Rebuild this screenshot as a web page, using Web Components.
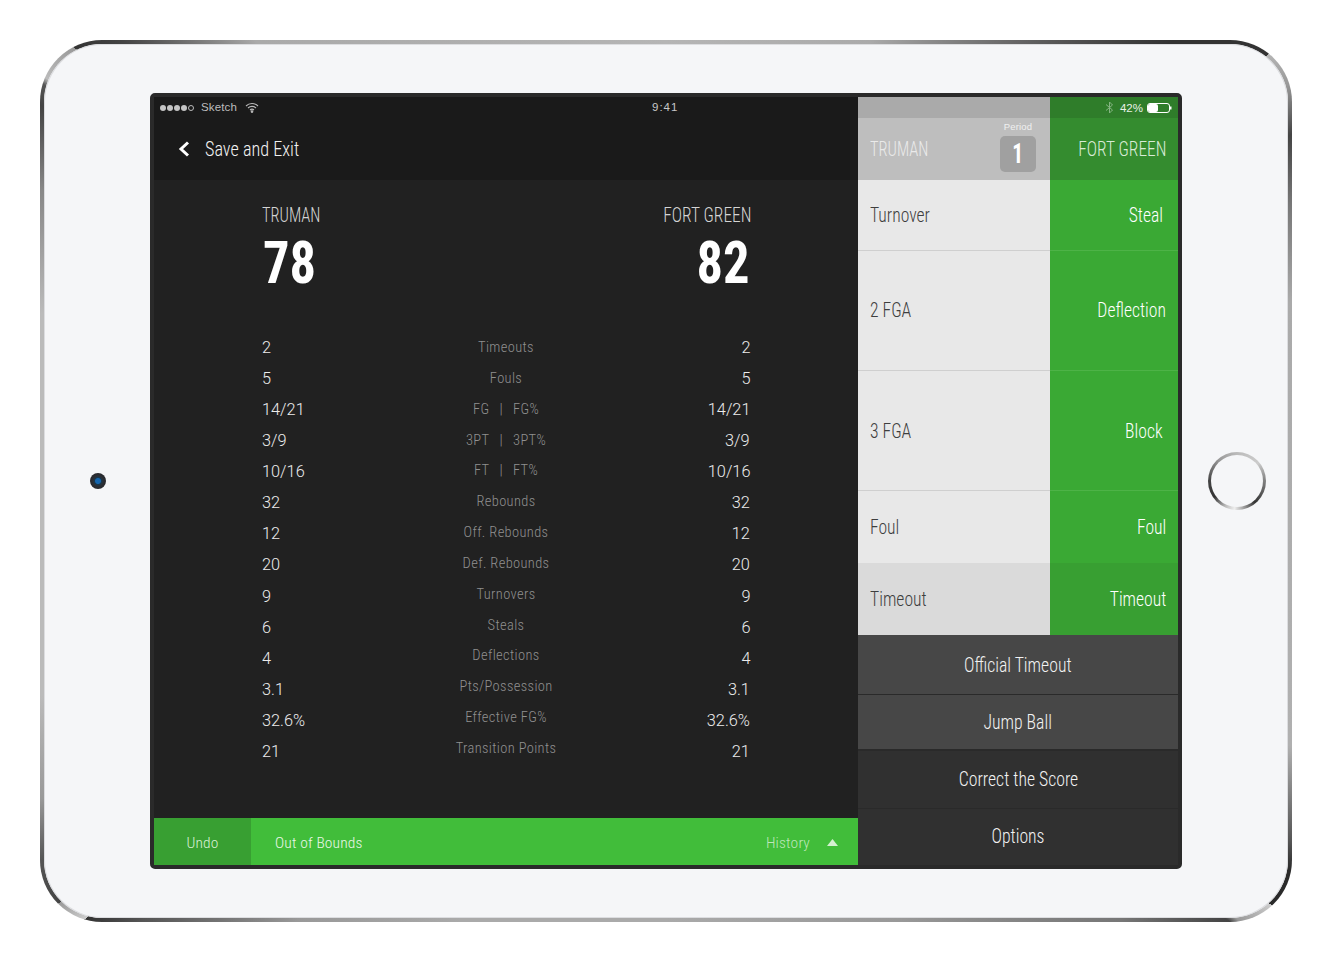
<!doctype html>
<html><head><meta charset="utf-8">
<style>
html,body{margin:0;background:#fff}
body{width:1332px;height:963px;overflow:hidden;font-family:"Roboto Condensed","Liberation Sans",sans-serif}
</style></head><body>
<ipad-frame>
  <game-screen></game-screen>
</ipad-frame>
<script>
const COND='"Roboto Condensed","Liberation Sans Narrow","Liberation Sans",sans-serif';
// condensed text helper: squeezes real text horizontally, anchored on the side it aligns to
const nt=(t,s,o='left')=>`<span style="display:inline-block;white-space:nowrap;transform:scaleX(${s});transform-origin:${o} center">${t}</span>`;
const pipe='<span style="padding:0 10px">|</span>';
const stats=[["2","Timeouts","2"],["5","Fouls","5"],["14/21","FG"+pipe+"FG%","14/21"],["3/9","3PT"+pipe+"3PT%","3/9"],["10/16","FT"+pipe+"FT%","10/16"],["32","Rebounds","32"],["12","Off. Rebounds","12"],["20","Def. Rebounds","20"],["9","Turnovers","9"],["6","Steals","6"],["4","Deflections","4"],["3.1","Pts/Possession","3.1"],["32.6%","Effective FG%","32.6%"],["21","Transition Points","21"]];
class IpadFrame extends HTMLElement{constructor(){super();this.attachShadow({mode:'open'}).innerHTML=`<style>
:host{display:flex;box-sizing:border-box;width:1252px;height:882px;margin:40px 0 0 40px;border:4px solid transparent;border-radius:62px;box-shadow:inset 0 0 0 1px #dcdde0;
background:linear-gradient(#f5f6f8,#f5f6f8) padding-box,conic-gradient(from 0deg at 50% 50%,#b5b5b5 0deg,#aaa 25deg,#555 42deg,#333 49deg,#333 54.7deg,#b5b5b5 54.7deg,#999 57.5deg,#444 61deg,#777 66deg,#aaa 74deg,#b0b0b0 113deg,#555 120deg,#2a2a2a 122deg,#2a2a2a 125deg,#ccc 125deg,#999 127.5deg,#444 128deg,#777 134deg,#999 152deg,#aaa 180deg,#aaa 205deg,#999 220deg,#555 230deg,#333 233deg,#ccc 233deg,#999 235.2deg,#444 235.2deg,#555 238.7deg,#999 243deg,#bbb 251deg,#bbb 285deg,#888 295deg,#444 301deg,#555 302.5deg,#bbb 303deg,#999 306.2deg,#333 306.2deg,#444 309deg,#aaa 317deg,#b5b5b5 360deg) border-box}
.l{width:106px;display:flex;align-items:center;justify-content:center;padding-left:2px;box-sizing:border-box}
.r{flex:1;display:flex;align-items:center;justify-content:center;padding-left:4px}
.cam{width:16px;height:16px;border-radius:50%;background:radial-gradient(circle,#1565ad 0 2.5px,#17384f 3.5px,#2c2f35 5px,#26282c 8px)}
.home{width:52px;height:52px;border:3px solid transparent;border-radius:50%;background:linear-gradient(#f5f6f8,#f5f6f8) padding-box,conic-gradient(#bbb 0,#ccc 50deg,#888 85deg,#333 140deg,#eee 185deg,#bbb 205deg,#333 235deg,#444 270deg,#999 320deg,#bbb 360deg) border-box}
</style><div class="l"><div class="cam"></div></div><slot></slot><div class="r"><div class="home"></div></div>`}}
customElements.define('ipad-frame',IpadFrame);

class StatusBar extends HTMLElement{constructor(){super();this.attachShadow({mode:'open'}).innerHTML=`<style>
:host{display:flex;align-items:center;height:21px;padding:0 0 0 6px;font:11.5px/21px "Liberation Sans",sans-serif;color:#bdbdbd;position:relative;letter-spacing:.15px}
.d{display:flex;gap:1px;margin-right:7px}.d i{width:6px;height:6px;border-radius:50%;background:#c4c4c4;box-sizing:border-box}.d i.o{background:none;border:1px solid #bbb}
svg{margin-left:8px}
.t{position:absolute;left:498px;font-size:11.5px;letter-spacing:1px;color:#c8c8c8}
</style><div class="d"><i></i><i></i><i></i><i></i><i class="o"></i></div><span>Sketch</span>
<svg width="14" height="10" viewBox="0 0 14 10" fill="none" stroke="#bbb" stroke-width="1.1"><path d="M1 3a8.6 8.6 0 0 1 12 0M3 5a5.8 5.8 0 0 1 8 0M5 7a3 3 0 0 1 4 0"/><circle cx="7" cy="8.6" r=".8" fill="#bbb"/></svg>
<span class="t">9:41</span>`}}
customElements.define('status-bar',StatusBar);

class BackNav extends HTMLElement{constructor(){super();this.attachShadow({mode:'open'}).innerHTML=`<style>
:host{display:flex;align-items:center;height:62px;padding-left:24px;gap:15px;color:#f2f2f2;font:300 20px ${COND}}
</style><svg width="12" height="16" viewBox="0 0 12 16" fill="none" stroke="#fff" stroke-width="3"><path d="M10 1.5 3 8l7 6.5"/></svg>${nt('Save and Exit',.91)}`}}
customElements.define('back-nav',BackNav);

class ScoreBoard extends HTMLElement{constructor(){super();this.attachShadow({mode:'open'}).innerHTML=`<style>
:host{display:block;height:133px;padding:0 108px;box-sizing:border-box}
.w{display:flex;justify-content:space-between}
.t{display:flex;flex-direction:column;padding-top:23px}
.n{font:300 20px/24px ${COND};color:#d4d4d4}
.s{font:700 59px/62px ${COND};color:#fff;margin-top:5px;padding-left:1px}
.r{text-align:right}
</style><div class="w"><div class="t"><span class="n">${nt('TRUMAN',.82)}</span><span class="s">${nt('78',.89)}</span></div><div class="t r"><span class="n" style="margin-right:-1px">${nt('FORT GREEN',.87,'right')}</span><span class="s">${nt('82',.89,'right')}</span></div></div>`}}
customElements.define('score-board',ScoreBoard);

class StatTable extends HTMLElement{constructor(){super();
const col=(i,c)=>`<div class="${c}">${stats.map(s=>`<span>${c=='m'?nt(s[i],1,'center'):nt(s[i],.96,c=='a'?'left':'right')}</span>`).join('')}</div>`;
this.attachShadow({mode:'open'}).innerHTML=`<style>
:host{display:grid;grid-template-columns:1fr auto 1fr;padding:18.5px 108px 0;height:505px;box-sizing:border-box;align-items:start}
.a,.b,.m{display:flex;flex-direction:column}
.a span,.b span{height:31.15px;line-height:31.15px}
.a,.b{font:300 17px "Roboto","Liberation Sans",sans-serif;color:#ececec}
.b{text-align:right}
.m{font:300 14.5px ${COND};color:#909090;text-align:center;letter-spacing:.35px;padding-top:1.5px}
.m span{height:30.85px;line-height:30.85px}
</style>${col(0,'a')}${col(1,'m')}${col(2,'b')}`}}
customElements.define('stat-table',StatTable);

class ActionBar extends HTMLElement{constructor(){super();this.attachShadow({mode:'open'}).innerHTML=`<style>
:host{display:flex;height:47px;background:#41bd3a;color:#eaf7e8;font:300 15.5px/51px ${COND};letter-spacing:.15px}
.u{width:97px;background:#389f32;text-align:center;color:#d9efd6}
.o{flex:1;padding-left:24px}
.h{color:#bde6b9}
svg{margin:21px 20px 0 17px}
</style><div class="u">Undo</div><div class="o">Out of Bounds</div><div class="h">History</div><svg width="11" height="7" viewBox="0 0 11 7"><path d="M5.5 0 11 7H0z" fill="#d4f0d1"/></svg>`}}
customElements.define('action-bar',ActionBar);

class TeamColumn extends HTMLElement{constructor(){super();const g=this.getAttribute('side')==='g';
const rows=(g?["Steal","Deflection","Block","Foul","Timeout"]:["Turnover","2 FGA","3 FGA","Foul","Timeout"]);
const hs=[71,120,120,72,72];
const pb=[0,2,0,0,0];
const mr=g?[3,0,3,0,0]:[0,0,0,0,0];
this.attachShadow({mode:'open'}).innerHTML=`<style>
:host{display:flex;flex-direction:column;width:${g?128:192}px;font:300 20px ${COND};color:${g?'#fff':'#3e3e3e'};background:${g?'#3aa934':'#e8e8e8'}}
.st{height:21px;background:${g?'#2f7d2a':'#aaaaaa'};display:flex;align-items:center;justify-content:flex-end;padding-right:6px;gap:4px;font:11.5px "Liberation Sans",sans-serif;color:#e8f2e6}
.st svg:first-child{margin-right:2px}
.hd{height:62px;background:${g?'#348c2f':'#bebebe'};display:flex;align-items:center;justify-content:space-between;padding:0 12px;color:${g?'#d8ebd6':'#eaeaea'};box-sizing:border-box}
.hd.x{justify-content:flex-end}
.p{display:flex;flex-direction:column;align-items:center;gap:4px;margin-right:2px;align-self:flex-start;padding-top:3px}
.p small{font:9.5px/11px "Liberation Sans",sans-serif;color:#f0f0f0;letter-spacing:.2px}
.p b{width:36px;height:36px;border-radius:5px;background:#a0a0a0;color:#fff;font:700 27px/36px ${COND};text-align:center}
.r{display:flex;align-items:center;padding:0 12px;box-sizing:border-box;border-bottom:1px solid ${g?'#4db347':'#cfcfcf'}}
.r.e{justify-content:flex-end}.r.nb{border-bottom:0}
.r.t{background:${g?'#389f32':'#dadada'}}
</style>
<div class="st">${g?`<svg width="9" height="13" viewBox="0 0 9 13" fill="none" stroke="#86b583"><path d="M1 3.5 7.5 9 4.5 12V1l3 3L1 9.5"/></svg><span>42%</span><svg width="25" height="10" viewBox="0 0 25 10"><rect x=".5" y=".5" width="22" height="9" rx="2.5" fill="none" stroke="#fff"/><rect x="1" y="1" width="10" height="8" rx="2" fill="#fff"/><rect x="23" y="3.5" width="1.5" height="3" fill="#fff"/></svg>`:''}</div>
<div class="hd ${g?'x':''}"><span>${g?nt('FORT GREEN',.87,'right'):nt('TRUMAN',.82)}</span>${g?'':'<div class="p"><small>Period</small><b>'+nt('1',.8,'center')+'</b></div>'}</div>
${rows.map((r,i)=>`<div class="r ${g?'e':''} ${i>=3?'nb':''} ${i==4?'t':''}" style="height:${hs[i]}px;padding-bottom:${pb[i]}px;padding-right:${12+mr[i]}px">${nt(r,.88,g?'right':'left')}</div>`).join('')}`}}
customElements.define('team-column',TeamColumn);

class MenuList extends HTMLElement{constructor(){super();const it=[["Official Timeout",59,'#474747',1,0],["Jump Ball",54,'#474747',2,0],["Correct the Score",57,'#303030',1,2],["Options",56,'#303030',0,2]];
this.attachShadow({mode:'open'}).innerHTML=`<style>
:host{display:flex;flex-direction:column;font:300 20px ${COND};color:#f2f2f2;background:#2a2a2a}
div{display:flex;align-items:center;justify-content:center;box-sizing:border-box}
</style>${it.map(i=>`<div style="height:${i[1]}px;background:${i[2]};margin-bottom:${i[3]}px;padding-bottom:${i[4]}px">${nt(i[0],.885,'center')}</div>`).join('')}`}}
customElements.define('menu-list',MenuList);

class GameScreen extends HTMLElement{constructor(){super();this.attachShadow({mode:'open'}).innerHTML=`<style>
:host{display:flex;width:1024px;height:768px;margin-top:49px;border:4px solid #2a2a2a;border-radius:5px;background:#212121}
.left{width:704px;display:flex;flex-direction:column}
.top{background:#1a1a1a}
.right{width:320px;display:flex;flex-direction:column}
.cols{display:flex;height:538px}
</style>
<div class="left"><div class="top"><status-bar></status-bar><back-nav></back-nav></div><score-board></score-board><stat-table></stat-table><action-bar></action-bar></div>
<div class="right"><div class="cols"><team-column side="w"></team-column><team-column side="g"></team-column></div><menu-list></menu-list></div>`}}
customElements.define('game-screen',GameScreen);
</script>
</body></html>
